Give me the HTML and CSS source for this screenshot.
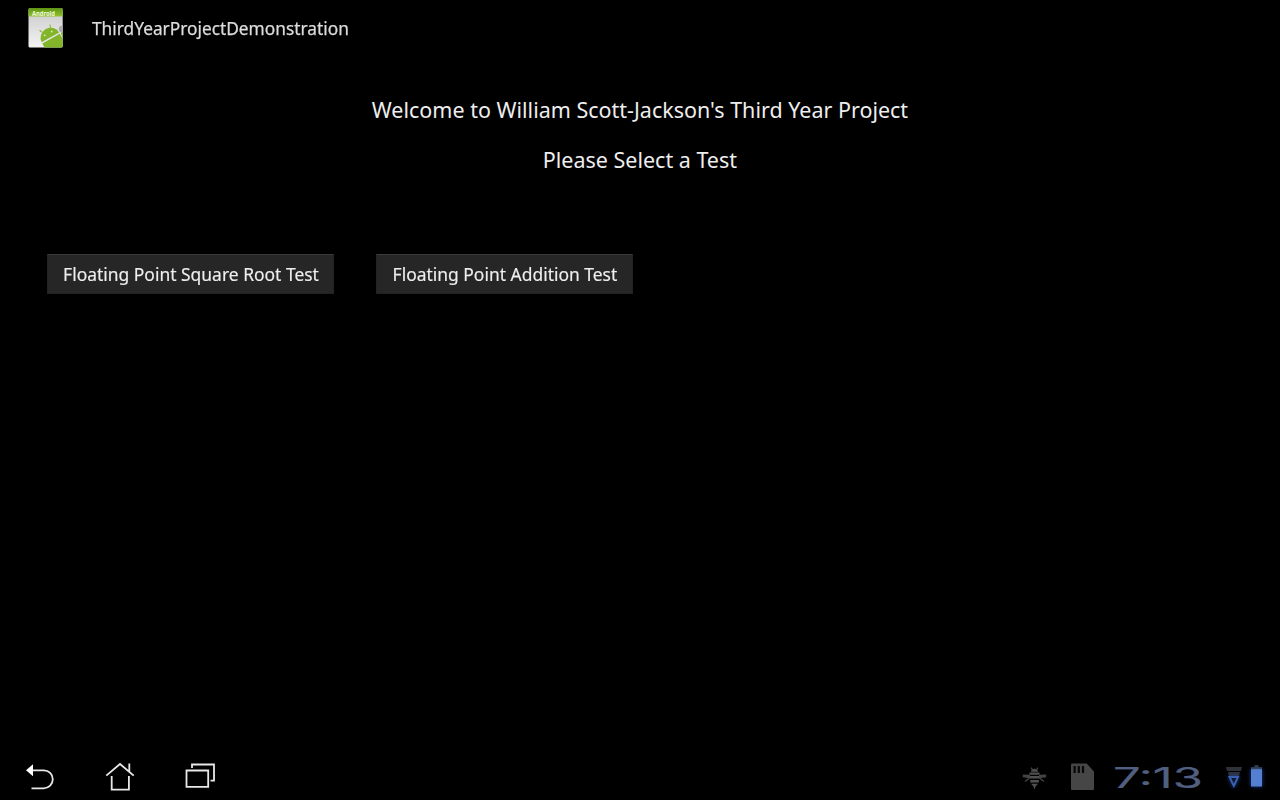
FILE: index.html
```html
<!DOCTYPE html>
<html lang="en">
<head>
<meta charset="utf-8">
<title>ThirdYearProjectDemonstration</title>
<link rel="stylesheet" href="styles.css">
</head>
<body>
<header class="action-bar">
  <svg class="app-icon" width="36" height="40" viewBox="0 0 36 40">
    <defs>
      <linearGradient id="paper" x2="0" y2="1"><stop stop-color="#c9c9c9"/><stop offset="1" stop-color="#f4f4f4"/></linearGradient>
      <linearGradient id="band" x2="0" y2="1"><stop stop-color="#5f9414"/><stop offset="1" stop-color="#8fc32d"/></linearGradient>
      <clipPath id="page"><rect x=".5" width="34.2" height="39.5" rx="1.5"/></clipPath>
    </defs>
    <g clip-path="url(#page)">
      <rect width="36" height="40" fill="url(#paper)"/>
      <rect width="36" height="8.5" fill="url(#band)"/>
      <text class="icon-label" x="4" y="8.3" textLength="23" lengthAdjust="spacingAndGlyphs">Android</text>
      <circle cx="34" cy="21" r="3.2" fill="#aaa"/>
      <g fill="#83b52a" transform="translate(22.4 29.4) rotate(-29)">
        <path d="M-10 0a10 9.5 0 0 1 20 0z"/>
        <path d="M-4.5-8l-1.5-3.5M4.5-8l1.5-3.5" stroke="#83b52a" stroke-width="1"/>
        <path d="M-10 1.3h20v16h-20z"/>
        <rect x="11" y="1" width="3.5" height="10" rx="1.7"/>
        <circle cx="-4" cy="-4.5" r=".9" fill="#dcebbd"/><circle cx="4" cy="-4.5" r=".9" fill="#dcebbd"/>
      </g>
    </g>
  </svg>
  <h1 class="app-title">ThirdYearProjectDemonstration</h1>
</header>
<main class="content">
  <p class="message"><span class="message-text">Welcome to William Scott-Jackson's Third Year Project</span></p>
  <p class="message"><span class="message-text">Please Select a Test</span></p>
  <div class="tests">
    <button class="test test-root"><span class="test-text">Floating Point Square Root Test</span></button>
    <button class="test test-add"><span class="test-text">Floating Point Addition Test</span></button>
  </div>
</main>
<footer class="system-bar">
  <nav class="nav">
    <svg width="80" height="48" viewBox="0 752 80 48"><path d="M31 770.3H43.8a9 9 0 0 1 0 18H31.5" fill="none" stroke="#e8e8e8" stroke-width="1.8"/><path d="M26 770.3l7-6v12z" fill="#fff"/></svg>
    <svg width="80" height="48" viewBox="80 752 80 48" fill="none" stroke="#e8e8e8" stroke-width="1.8"><path d="M106.3 775.6L120 764l13.7 11.6M111.7 776v13.7h17.2V776M129.3 771.5v-8"/></svg>
    <svg width="80" height="48" viewBox="160 752 80 48" fill="none" stroke="#e8e8e8" stroke-width="1.8"><path d="M186.5 770.5h21.7v16.3h-21.7zM192 768v-3.5h22v16.2h-3.5"/></svg>
  </nav>
  <div class="status">
    <svg width="44" height="48" viewBox="1015 752 44 48" fill="#505050">
      <path d="M1031 771.8c0-4 7-4 7 0zM1029.5 772.5h10v2.2h-10zM1030 776h9.2v2.6h-9.2zM1030.3 780h8.6v2.4h-8.6zM1031 783.7h7l-2.3 2.6-1.2 3.2-1.2-3.2z"/>
      <path d="M1030 774.8l-7.2-.3v2.7l7.2 1zM1039 774.8l7.2-.3v2.7l-7.2 1z" fill="#444"/>
      <path d="M1029.5 778l-4.5 3.5M1039.5 778l4.5 3.5M1032.2 769.5l-1-1.8M1036.8 769.5l1-1.8" stroke="#444" stroke-width="1.4"/>
    </svg>
    <svg width="46" height="48" viewBox="1059 752 46 48">
      <path d="M1072 763.5h14.7l7.3 8V789q0 1-1 1h-21q-1 0-1-1v-24.5q0-1 1-1z" fill="#464646"/>
      <path d="M1073.5 766h2.2v7h-2.2zM1077.7 766h2.2v7h-2.2zM1081.9 766h2.2v7h-2.2z" fill="#080808"/>
    </svg>
    <div class="clock"><span class="clock-text">7:13</span></div>
    <svg class="signals" width="65" height="48" viewBox="1215 752 65 48">
      <path d="M1226 767h16l-1 4h-14zM1228 772h12l-1 4h-10z" fill="#30323a"/>
      <path class="glow" d="M1229.5 777h8.5l-4.2 9z" fill="#0c1730" stroke="#3c60b0" stroke-width="2"/>
      <path d="M1254.5 765h4v2.5h-4z" fill="#34363c"/>
      <rect class="glow" x="1251" y="769" width="11" height="17.5" fill="#557fd0"/>
      <path d="M1251 767.2h11v2h-11z" fill="#354461"/>
    </svg>
  </div>
</footer>
</body>
</html>
```
FILE: styles.css
```css
* { box-sizing: border-box; }
body {
  margin: 0;
  width: 1280px;
  height: 800px;
  display: flex;
  flex-direction: column;
  overflow: hidden;
  background: #000;
  color: #eee;
  font-family: "Noto Sans", "Open Sans", sans-serif;
}
svg { display: block; }
.action-bar {
  height: 56px;
  padding-left: 28px;
  display: flex;
  align-items: center;
  gap: 28px;
}
.icon-label { font: bold 6.5px "Noto Sans", sans-serif; fill: #eef7d6; }
.app-title {
  margin: 0;
  font-size: 18px;
  line-height: 24px;
  font-weight: 400;
  color: #dcdcdc;
  -webkit-text-stroke: .25px #dcdcdc;
  transform: scaleX(.961);
  transform-origin: left;
}
.content { flex: 1; padding: 28px 47px 0; }
.message {
  margin: 0;
  height: 50px;
  display: flex;
  align-items: center;
  justify-content: center;
  font-size: 22px;
  line-height: 30px;
  white-space: nowrap;
}
.message-text { transform: translateX(-.5px) scaleX(.977); }
.tests { display: flex; gap: 42px; padding-top: 70px; }
.test {
  height: 40px;
  padding: 0;
  display: flex;
  align-items: center;
  justify-content: center;
  border: 1px solid #222;
  border-top-color: #3b3b3b;
  background: #262626;
  color: #eee;
  font: 18px "Noto Sans", "Open Sans", sans-serif;
  -webkit-text-stroke: .15px #eee;
  white-space: nowrap;
}
.test-text { transform: scaleX(.969); }
.test-root { width: 287px; }
.test-add { width: 257px; }
.system-bar { height: 48px; display: flex; justify-content: space-between; }
.nav, .status { display: flex; }
.clock {
  width: 110px;
  display: flex;
  align-items: center;
  justify-content: center;
  font: 28px/30px Inter, sans-serif;
  color: #515f80;
  -webkit-text-stroke: .2px #515f80;
}
.clock-text { transform: translate(-2px, 2px) scaleX(1.74); }
.glow { filter: drop-shadow(0 0 2px #1b3f94); }
```
